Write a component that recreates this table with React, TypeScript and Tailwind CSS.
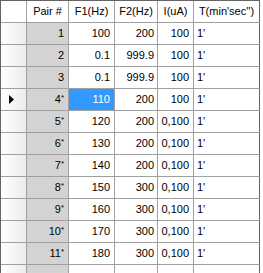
import React from 'react';

type Row = { pair: string; f1: string; f2: string; i: string; t: string };

const rows: Row[] = [
  { pair: '1', f1: '100', f2: '200', i: '100', t: "1'" },
  { pair: '2', f1: '0.1', f2: '999.9', i: '100', t: "1'" },
  { pair: '3', f1: '0.1', f2: '999.9', i: '100', t: "1'" },
  { pair: '4*', f1: '110', f2: '200', i: '100', t: "1'" },
  { pair: '5*', f1: '120', f2: '200', i: '0,100', t: "1'" },
  { pair: '6*', f1: '130', f2: '200', i: '0,100', t: "1'" },
  { pair: '7*', f1: '140', f2: '200', i: '0,100', t: "1'" },
  { pair: '8*', f1: '150', f2: '300', i: '0,100', t: "1'" },
  { pair: '9*', f1: '160', f2: '300', i: '0,100', t: "1'" },
  { pair: '10*', f1: '170', f2: '300', i: '0,100', t: "1'" },
  { pair: '11*', f1: '180', f2: '300', i: '0,100', t: "1'" },
];

const SELECTED = 3;

function PairLabel({ value }: { value: string }) {
  // the little asterisk sits high, like a superscript
  const star = value.endsWith('*');
  const num = star ? value.slice(0, -1) : value;
  return (
    <span>
      {num}
      {star && <span className="relative -top-[3px] text-[8px]">*</span>}
    </span>
  );
}

function Arrow() {
  return (
    <svg width="5" height="9" viewBox="0 0 5 9" className="block">
      <path d="M0 0 L5 4.5 L0 9 Z" fill="#000" />
    </svg>
  );
}

export default function App() {
  const cell = 'h-[22px] border-r border-b border-[#a0a0a0] flex items-center';
  return (
    <div
      className="w-[263px] h-[273px] overflow-hidden bg-white text-[11px] text-black"
      style={{ fontFamily: '"Liberation Sans", Arial, sans-serif' }}
    >
      <div className="w-[260px] border-l border-t border-[#646464]">
        {/* Header */}
        <div className="flex">
          <div className="w-[26px] h-[22px] border-r border-b border-[#a0a0a0] bg-white" />
          <div className={`${cell} w-[42px] justify-center bg-white`}>Pair #</div>
          <div className={`${cell} w-[46px] justify-center bg-white`}>F1(Hz)</div>
          <div className={`${cell} w-[43px] justify-center bg-white`}>F2(Hz)</div>
          <div className={`${cell} w-[36px] justify-center bg-white`}>I(uA)</div>
          <div className={`${cell} w-[66px] justify-center bg-white border-r-[#646464]`}>
            T(min'sec'')
          </div>
        </div>

        {/* Rows */}
        {rows.map((r, idx) => (
          <div key={idx} className="flex">
            <div className="w-[26px] h-[22px] border-r border-b border-[#a0a0a0] bg-linear-to-r from-white to-[#ececec] flex items-center pl-[8px]">
              {idx === SELECTED && <Arrow />}
            </div>
            <div className={`${cell} w-[42px] justify-end pr-[4px] bg-[#d3d3d3]`}>
              <PairLabel value={r.pair} />
            </div>
            <div
              className={`${cell} w-[46px] justify-end pr-[4px] ${
                idx === SELECTED ? 'bg-[#3399ff] text-white' : 'bg-white'
              }`}
            >
              {r.f1}
            </div>
            <div className={`${cell} w-[43px] justify-end pr-[3px] bg-white`}>{r.f2}</div>
            <div className={`${cell} w-[36px] justify-end pr-[4px] bg-white`}>{r.i}</div>
            <div className={`${cell} w-[66px] pl-[3px] bg-white border-r-[#646464]`}>{r.t}</div>
          </div>
        ))}

        {/* New row placeholder */}
        <div className="flex">
          <div className="w-[26px] h-[22px] border-r border-b border-[#a0a0a0] bg-linear-to-r from-white to-[#ececec]" />
          <div className={`${cell} w-[42px] bg-[#d3d3d3]`} />
          <div className={`${cell} w-[46px] bg-white`} />
          <div className={`${cell} w-[43px] bg-white`} />
          <div className={`${cell} w-[36px] bg-white`} />
          <div className={`${cell} w-[66px] bg-white border-r-[#646464]`} />
        </div>
      </div>
    </div>
  );
}
